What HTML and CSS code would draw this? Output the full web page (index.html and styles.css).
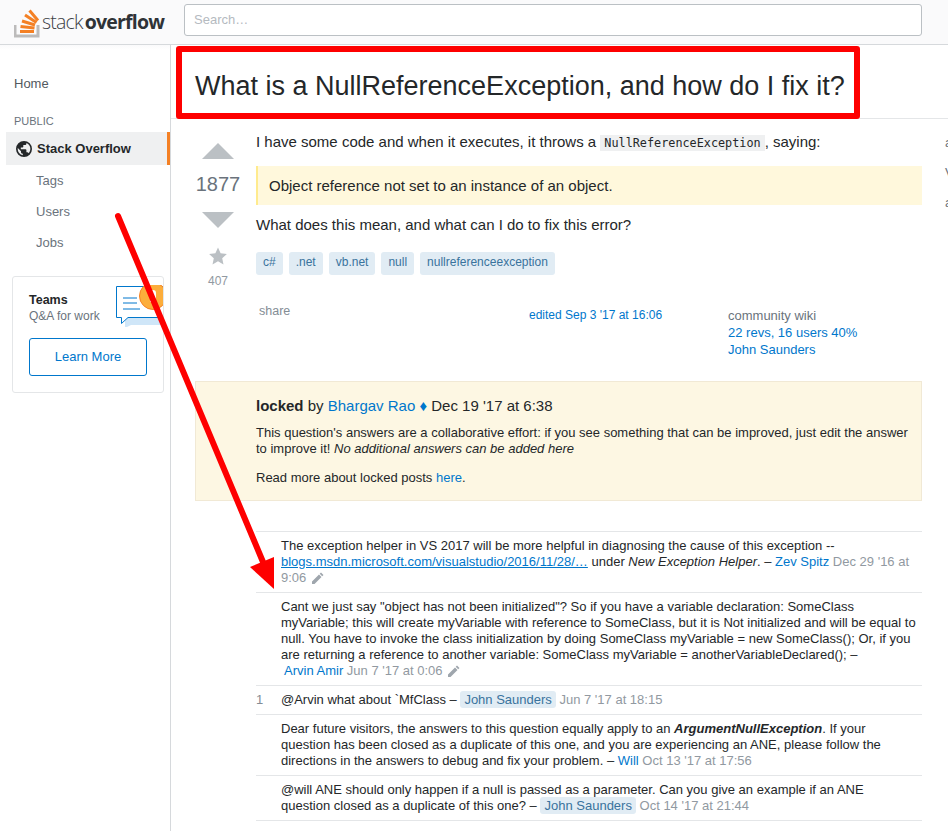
FILE: index.html
```html
<!DOCTYPE html>
<html>
<head>
  <meta charset="UTF-8">
  <title>What is a NullReferenceException, and how do I fix it?</title>
  <link rel="stylesheet" href="styles.css">
</head>
<body>
  <header class="topbar">
    <a class="logo" href="#">
      <svg width="26" height="34" viewBox="0 0 26 34">
        <path d="M1 21v11h23V21" fill="none" stroke="#bcbbbb" stroke-width="3"/>
        <g stroke="#f48024" stroke-width="3" fill="none">
          <path d="M6 27.500h14"/>
          <path d="M6.500 22.500l14 1.600"/>
          <path d="M8 17l13 4"/>
          <path d="M11 11l11.500 7.500"/>
          <path d="M15.500 6.500l8.500 10"/>
        </g>
      </svg>
      <span class="logo-text">stack<b>overflow</b></span>
    </a>
    <div class="search">Search…</div>
  </header>

  <div class="layout">
    <aside class="sidebar">
      <a class="nav-home" href="#">Home</a>
      <div class="nav-label">PUBLIC</div>
      <a class="nav-active" href="#">
        <svg width="18" height="18" viewBox="0 0 18 18">
          <path d="M9 1a8 8 0 1 0 0 16A8 8 0 0 0 9 1zM8 15.200A6.300 6.300 0 0 1 2.800 8l3.200 3.200v1c0 .8.700 1.300 1.500 1.300zm5.600-2c-.2-.6-.8-1-1.400-1h-.8V10c0-.4-.4-.8-.8-.8H5.800V7.500h1.700c.4 0 .8-.4.800-.8V5h1.500c.9 0 1.600-.7 1.600-1.600v-.4a6.300 6.300 0 0 1 2.200 10.200z" fill="#242729"/>
        </svg>
        Stack Overflow
      </a>
      <a class="nav-sub" href="#">Tags</a>
      <a class="nav-sub" href="#">Users</a>
      <a class="nav-sub" href="#">Jobs</a>

      <div class="teams">
        <svg class="teams-art" width="48" height="44" viewBox="0 0 48 44">
          <path d="M9 42v-9h39v7H15l-4 2z" fill="#cfe6f8"/>
          <path d="M.5 1.500h47v31H12l-6.500 6v-6H.5z" fill="#fff" stroke="#0077cc"/>
          <path d="M7 13h14M7 18h14M7 24h17" stroke="#0077cc"/>
          <circle cx="37" cy="11" r="13.500" fill="#fcad3b" stroke="#f48024"/>
          <path d="M34 17V8a3 3 0 0 1 6 0v9z" fill="#fff"/>
        </svg>
        <div class="teams-name">Teams</div>
        <div class="teams-sub">Q&amp;A for work</div>
        <a class="teams-btn" href="#">Learn More</a>
      </div>
    </aside>

    <main class="main">
      <div class="title-bar">
        <h1>What is a NullReferenceException, and how do I fix it?</h1>
      </div>

      <div class="content">
        <div class="column">
          <div class="question">
            <div class="votes">
              <div class="arrow-up"></div>
              <div class="count">1877</div>
              <div class="arrow-down"></div>
              <svg class="star" width="18" height="18" viewBox="0 0 18 18">
                <path d="M9 .5l2.600 5.800 6.300.7-4.700 4.200 1.300 6.300L9 14.300l-5.500 3.200 1.300-6.300L.1 7l6.300-.7z" fill="#bbc0c4"/>
              </svg>
              <div class="fav">407</div>
            </div>
            <div class="post">
              <p class="first">I have some code and when it executes, it throws a <code>NullReferenceException</code>, saying:</p>
              <blockquote>Object reference not set to an instance of an object.</blockquote>
              <p>What does this mean, and what can I do to fix this error?</p>
              <div class="tags">
                <a href="#">c#</a>
                <a href="#">.net</a>
                <a href="#">vb.net</a>
                <a href="#">null</a>
                <a href="#">nullreferenceexception</a>
              </div>
              <div class="post-meta">
                <a class="share" href="#">share</a>
                <a class="edited" href="#">edited Sep 3 '17 at 16:06</a>
                <div class="wiki">
                  <span>community wiki</span>
                  <a href="#">22 revs, 16 users 40%</a>
                  <a href="#">John Saunders</a>
                </div>
              </div>
            </div>
          </div>

          <div class="locked">
            <div class="locked-head"><b>locked</b> by <a href="#">Bhargav Rao ♦</a> Dec 19 '17 at 6:38</div>
            <p>This question's answers are a collaborative effort: if you see something that can be improved, just edit the answer to improve it! <i>No additional answers can be added here</i></p>
            <p>Read more about locked posts <a href="#">here</a>.</p>
          </div>

          <div class="comments">
            <div class="comment">
              <div class="score"></div>
              <div class="body">The exception helper in VS 2017 will be more helpful in diagnosing the cause of this exception -- <a class="ext" href="#">blogs.msdn.microsoft.com/visualstudio/2016/11/28/…</a> under <i>New Exception Helper</i>. – <a href="#">Zev Spitz</a> <span class="when">Dec 29 '16 at 9:06</span> <svg class="pencil" width="14" height="14" viewBox="0 0 14 14"><path d="M10 1.500l2.500 2.500-1.300 1.300-2.500-2.500zM8 3.500L10.500 6l-7 7H1v-2.500z" fill="#9fa6ad"/></svg></div>
            </div>
            <div class="comment">
              <div class="score"></div>
              <div class="body">Cant we just say "object has not been initialized"? So if you have a variable declaration: SomeClass myVariable; this will create myVariable with reference to SomeClass, but it is Not initialized and will be equal to null. You have to invoke the class initialization by doing SomeClass myVariable = new SomeClass(); Or, if you are returning a reference to another variable: SomeClass myVariable = anotherVariableDeclared(); –<br><a class="pad" href="#">Arvin Amir</a> <span class="when">Jun 7 '17 at 0:06</span> <svg class="pencil" width="14" height="14" viewBox="0 0 14 14"><path d="M10 1.500l2.500 2.500-1.300 1.300-2.500-2.500zM8 3.500L10.500 6l-7 7H1v-2.500z" fill="#9fa6ad"/></svg></div>
            </div>
            <div class="comment">
              <div class="score">1</div>
              <div class="body">@Arvin what about `MfClass – <a class="owner" href="#">John Saunders</a> <span class="when">Jun 7 '17 at 18:15</span></div>
            </div>
            <div class="comment">
              <div class="score"></div>
              <div class="body">Dear future visitors, the answers to this question equally apply to an <b><i>ArgumentNullException</i></b>. If your<br>question has been closed as a duplicate of this one, and you are experiencing an ANE, please follow the<br>directions in the answers to debug and fix your problem. – <a href="#">Will</a> <span class="when">Oct 13 '17 at 17:56</span></div>
            </div>
            <div class="comment">
              <div class="score"></div>
              <div class="body">@will ANE should only happen if a null is passed as a parameter. Can you give an example if an ANE<br>question closed as a duplicate of this one? – <a class="owner" href="#">John Saunders</a> <span class="when">Oct 14 '17 at 21:44</span></div>
            </div>
          </div>
        </div>

        <div class="peek">
          <span>a</span>
          <span>V</span>
          <span>a</span>
        </div>
      </div>
    </main>
  </div>

  <!-- red annotations pasted on top of the screenshot -->
  <div class="mark-box"></div>
  <svg class="mark-arrow" width="948" height="831" viewBox="0 0 948 831">
    <path d="M118 216L263 562" stroke="#fe0000" stroke-width="6" stroke-linecap="round"/>
    <path d="M250 567L274 589V557z" fill="#fe0000"/>
  </svg>
</body>
</html>
```

FILE: styles.css
```css
* {
  box-sizing: border-box;
}

html, body {
  height: 831px;
  overflow: hidden;
}

body {
  margin: 0;
  font-family: "Liberation Sans", Arial, sans-serif;
  color: #242729;
  background-color: #fff;
  position: relative;
}

a {
  color: #0077cc;
  text-decoration: none;
}

/* barra superior */
.topbar {
  height: 45px;
  background-color: #fafafb;
  border-bottom: 1px solid #d6d9dc;
  display: flex;
  align-items: flex-start;
  padding: 4px 26px 0 14px;
}

.logo {
  display: flex;
  width: 170px;
  flex: none;
  color: #3b4045;
}

.logo svg {
  flex: none;
}

.logo-text {
  font-family: "Open Sans", sans-serif;
  font-size: 19.5px;
  font-weight: 300;
  letter-spacing: -0.8px;
  line-height: 36px;
  margin-left: 2px;
  color: #3c4146;
}

.logo-text b {
  font-weight: 700;
  margin-left: 2px;
  color: #2f3337;
}

.search {
  flex: 1;
  height: 32px;
  background-color: #fff;
  border: 1px solid #bbc0c4;
  border-radius: 3px;
  padding: 0 9px;
  font-size: 13px;
  line-height: 30px;
  color: #b5babf;
}

.layout {
  display: flex;
  height: 786px;
}

/* menu lateral */
.sidebar {
  width: 171px;
  flex: none;
  border-right: 1px solid #d6d9dc;
  padding-top: 31px;
  font-size: 13px;
  background: linear-gradient(#fafafb, #fff 5px);
}

.nav-home {
  display: block;
  color: #525960;
  padding-left: 14px;
  line-height: 16px;
}

.nav-label {
  color: #6a737c;
  font-size: 11px;
  line-height: 14px;
  padding-left: 14px;
  margin-top: 22px;
}

.nav-active {
  display: flex;
  align-items: center;
  gap: 4px;
  height: 33px;
  margin: 4px 0 0 6px;
  padding-left: 9px;
  background-color: #eff0f1;
  border-right: 3px solid #f48024;
  color: #242729;
  font-weight: 700;
}

.nav-sub {
  display: block;
  color: #6a737c;
  padding-left: 36px;
  height: 31px;
  line-height: 31px;
}

.teams {
  position: relative;
  margin: 18px 6px 0 12px;
  height: 117px;
  border: 1px solid #e4e6e8;
  border-radius: 3px;
  padding: 16px;
  overflow: hidden;
}

.teams-art {
  position: absolute;
  top: 8px;
  left: 103px;
}

.teams-name {
  font-weight: 700;
  font-size: 12.5px;
  line-height: 15px;
}

.teams-sub {
  color: #6a737c;
  font-size: 12px;
  line-height: 17px;
}

.teams-btn {
  display: block;
  width: 118px;
  height: 38px;
  margin-top: 13px;
  border: 1px solid #0077cc;
  border-radius: 3px;
  text-align: center;
  line-height: 35px;
  font-size: 13px;
}

/* contenido */
.main {
  flex: 1;
  min-width: 0;
  overflow: hidden;
}

.title-bar {
  height: 74px;
  border-bottom: 1px solid #e4e6e8;
  padding: 0 0 0 24px;
}

h1 {
  margin: 0;
  font-size: 27px;
  font-weight: 400;
  line-height: 82px;
  white-space: nowrap;
}

.content {
  display: flex;
  padding: 12px 0 0 24px;
}

.column {
  width: 727px;
  flex: none;
}

.question {
  display: flex;
  height: 250px;
}

.votes {
  width: 46px;
  flex: none;
  display: flex;
  flex-direction: column;
  align-items: center;
  padding-top: 12px;
}

.arrow-up {
  border: 16px solid transparent;
  border-top: 0;
  border-bottom-color: #bbc0c4;
}

.arrow-down {
  border: 16px solid transparent;
  border-bottom: 0;
  border-top-color: #bbc0c4;
}

.count {
  font-size: 20px;
  line-height: 26px;
  color: #6a737c;
  margin: 12px 0 15px;
}

.star {
  margin-top: 19px;
}

.fav {
  font-size: 12px;
  line-height: 14px;
  color: #9199a1;
  margin-top: 9px;
}

.post {
  margin-left: 15px;
  flex: 1;
  font-size: 15px;
  line-height: 19px;
}

.post p {
  margin: 0;
}

.post p.first {
  height: 20px;
  padding-top: 1px;
}

code {
  font-family: "DejaVu Sans Mono", "Liberation Mono", monospace;
  font-size: 11.8px;
  line-height: 1;
  background-color: #eff0f1;
  padding: 1px 4px;
}

blockquote {
  margin: 15px 0 10px;
  height: 39px;
  background-color: #fff8dc;
  border-left: 2px solid #ffeb8e;
  padding-left: 11px;
  line-height: 39px;
}

.tags {
  display: flex;
  gap: 6px;
  margin-top: 18px;
}

.tags a {
  display: block;
  height: 23px;
  line-height: 21px;
  padding: 0 7px;
  background-color: #e1ecf4;
  border-radius: 3px;
  color: #39739d;
  font-size: 12px;
}

.post-meta {
  display: flex;
  font-size: 12px;
  margin-top: 29px;
}

.share {
  color: #848d95;
  width: 273px;
  padding-left: 3px;
  line-height: 14px;
  font-size: 12.5px;
  flex: none;
}

.edited {
  width: 199px;
  flex: none;
  line-height: 22px;
}

.wiki {
  display: flex;
  flex-direction: column;
  color: #6a737c;
  line-height: 17px;
  font-size: 13px;
  margin-top: 3px;
}

.locked {
  height: 120px;
  background-color: #fdf7e3;
  border: 1px solid #f1e9d5;
  padding: 15px 12px 0 60px;
  font-size: 13px;
  line-height: 16px;
}

.locked-head {
  font-size: 15px;
  line-height: 18px;
  margin-bottom: 10px;
}

.locked p {
  margin: 0 0 13px;
}

.comments {
  margin: 30px 0 0 61px;
  border-top: 1px solid #e4e6e8;
  font-size: 13px;
  line-height: 16px;
}

.comment {
  display: flex;
  border-bottom: 1px solid #e4e6e8;
  padding: 6px 0;
}

.score {
  width: 25px;
  flex: none;
  color: #848d95;
}

.body {
  flex: 1;
}

.ext {
  text-decoration: underline;
}

.when {
  color: #9199a1;
}

.pad {
  margin-left: 3px;
}

.owner {
  background-color: #e1ecf4;
  border-radius: 3px;
  padding: 1px 4px;
  color: #39739d;
}

.pencil {
  vertical-align: -3px;
  margin-left: 1px;
}

.peek {
  margin: -3px 0 0 23px;
  display: flex;
  flex-direction: column;
  color: #6a737c;
  font-size: 13px;
  line-height: 30px;
}

/* anotaciones rojas */
.mark-box {
  position: absolute;
  left: 176px;
  top: 46px;
  width: 684px;
  height: 73px;
  border: 6px solid #fe0000;
  border-radius: 3px;
}

.mark-arrow {
  position: absolute;
  left: 0;
  top: 0;
}
```
